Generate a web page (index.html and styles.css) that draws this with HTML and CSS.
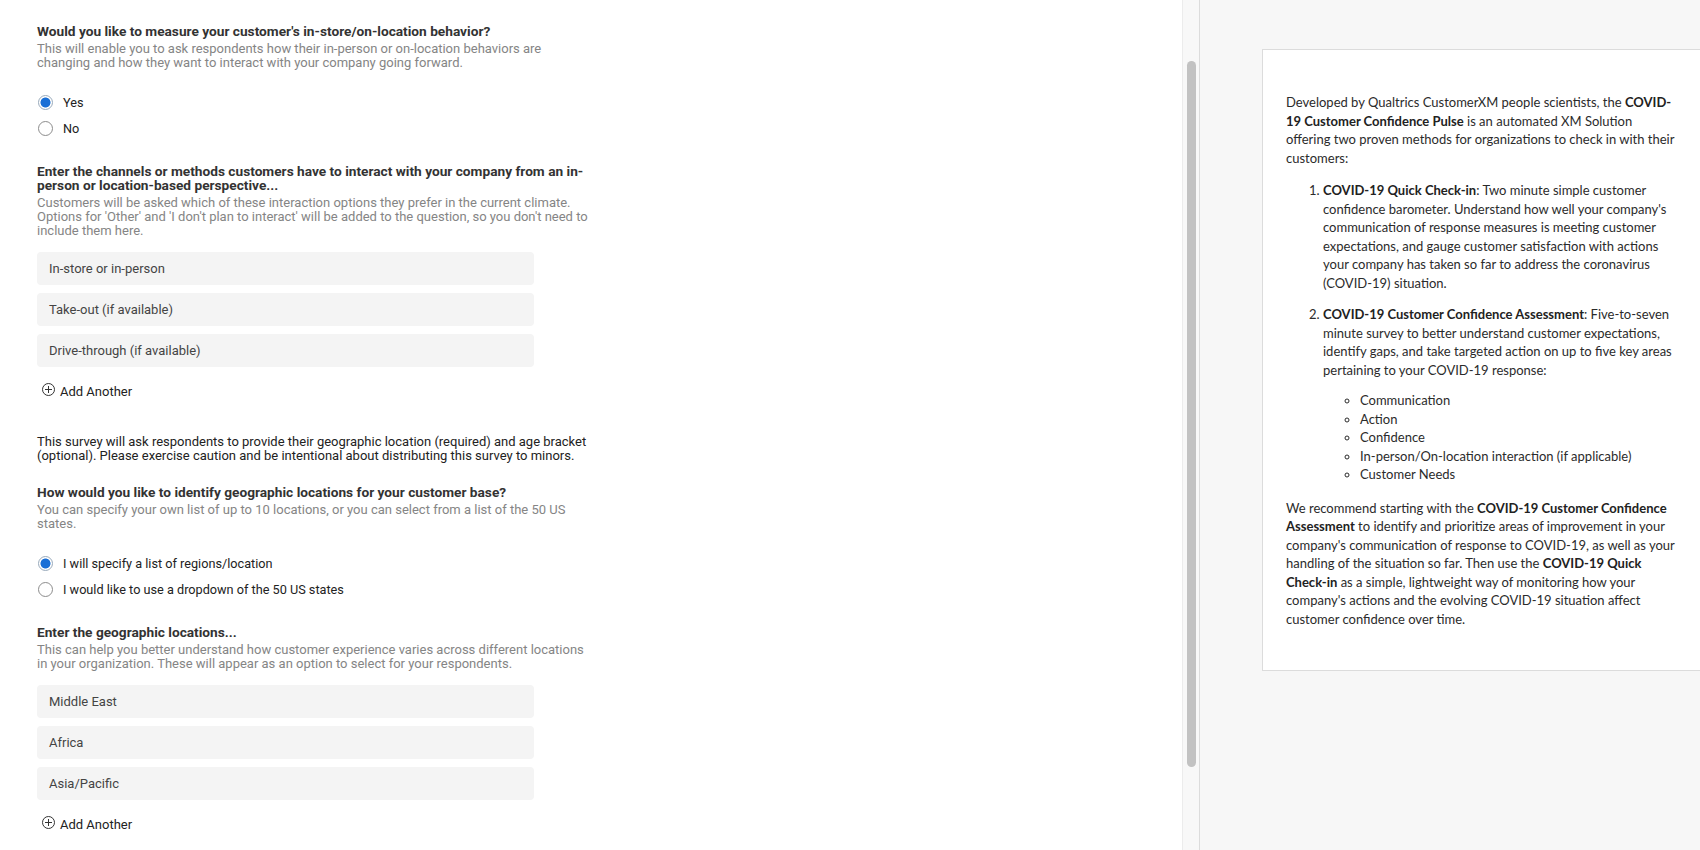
FILE: index.html
```
<!DOCTYPE html>
<html lang="en">
<head>
    <meta charset="UTF-8">
    <title>COVID-19 Customer Confidence Pulse</title>
    <link rel="stylesheet" href="styles.css">
</head>
<body>
<div class="layout">
    <div class="form-pane">
        <div class="question">
            <h3>Would you like to measure your customer's in-store/on-location behavior?</h3>
            <p class="hint">This will enable you to ask respondents how their in-person or on-location behaviors are changing and how they want to interact with your company going forward.</p>
        </div>
        <ul class="choices">
            <li><span class="radio checked"></span>Yes</li>
            <li><span class="radio"></span>No</li>
        </ul>

        <div class="question">
            <h3>Enter the channels or methods customers have to interact with your company from an in-person or location-based perspective...</h3>
            <p class="hint">Customers will be asked which of these interaction options they prefer in the current climate. Options for 'Other' and 'I don't plan to interact' will be added to the question, so you don't need to include them here.</p>
        </div>
        <div class="entries">
            <div class="entry">In-store or in-person</div>
            <div class="entry">Take-out (if available)</div>
            <div class="entry">Drive-through (if available)</div>
        </div>
        <a class="add" href="#"><span class="add-icon"></span>Add Another</a>

        <p class="notice">This survey will ask respondents to provide their geographic location (required) and age bracket (optional). Please exercise caution and be intentional about distributing this survey to minors.</p>

        <div class="question">
            <h3>How would you like to identify geographic locations for your customer base?</h3>
            <p class="hint">You can specify your own list of up to 10 locations, or you can select from a list of the 50 US states.</p>
        </div>
        <ul class="choices">
            <li><span class="radio checked"></span>I will specify a list of regions/location</li>
            <li><span class="radio"></span>I would like to use a dropdown of the 50 US states</li>
        </ul>

        <div class="question">
            <h3>Enter the geographic locations...</h3>
            <p class="hint">This can help you better understand how customer experience varies across different locations in your organization. These will appear as an option to select for your respondents.</p>
        </div>
        <div class="entries">
            <div class="entry">Middle East</div>
            <div class="entry">Africa</div>
            <div class="entry">Asia/Pacific</div>
        </div>
        <a class="add" href="#"><span class="add-icon"></span>Add Another</a>
    </div>

    <div class="scroll-track"><div class="scroll-thumb"></div></div>

    <div class="info-pane">
        <div class="info-card">
            <p>Developed by Qualtrics CustomerXM people scientists, the <b>COVID-19 Customer Confidence Pulse</b> is an automated XM Solution<br>offering two proven methods for organizations to check in with their customers:</p>
            <ol>
                <li><b>COVID-19 Quick Check-in</b>: Two minute simple customer confidence barometer. Understand how well your company's communication of response measures is meeting customer expectations, and gauge customer satisfaction with actions your company has taken so far to address the coronavirus (COVID-19) situation.</li>
                <li><b>COVID-19 Customer Confidence Assessment</b>: Five-to-seven minute survey to better understand customer expectations, identify gaps, and take targeted action on up to five key areas pertaining to your COVID-19 response:
                    <ul>
                        <li>Communication</li>
                        <li>Action</li>
                        <li>Confidence</li>
                        <li>In-person/On-location interaction (if applicable)</li>
                        <li>Customer Needs</li>
                    </ul>
                </li>
            </ol>
            <p>We recommend starting with the <b>COVID-19 Customer Confidence Assessment</b> to identify and prioritize areas of improvement in your company's communication of response to COVID-19, as well as your handling of the situation so far. Then use the <b>COVID-19 Quick Check-in</b> as a simple, lightweight way of monitoring how your company's actions and the evolving COVID-19 situation affect customer confidence over time.</p>
        </div>
    </div>
</div>
</body>
</html>
```

FILE: styles.css
```
* {
    margin: 0;
    padding: 0;
    box-sizing: border-box;
}

body {
    font-family: Roboto, "Liberation Sans", Arial, sans-serif;
    color: #333;
    background: #fff;
    overflow: hidden;
}

ul, ol {
    list-style: none;
}

.layout {
    display: flex;
    height: 850px;
    overflow: hidden;
}

/* left: setup form */
.form-pane {
    width: 1182px;
    flex-shrink: 0;
    padding: 24px 0 0 37px;
}

.question {
    width: 556px;
    font-size: 13px;
    line-height: 14px;
}

.question h3 {
    font-size: 13.7px;
    font-weight: 700;
    color: #333;
    margin-bottom: 4px;
}

.hint {
    color: #858585;
}

.choices {
    margin: 19.5px 0 22.5px;
    font-size: 12.7px;
}

.choices li {
    display: flex;
    align-items: center;
    height: 26px;
    color: #222;
}

.radio {
    width: 15px;
    height: 15px;
    border: 1px solid #8c8c8c;
    border-radius: 50%;
    background: #fff;
    margin-left: 1px;
    margin-right: 10px;
}

.radio.checked {
    border-color: #9ab;
    background: radial-gradient(circle, #1a6fd6 0, #1a6fd6 4.6px, #fff 5.4px);
}

.entries {
    margin-top: 14px;
    width: 497px;
}

.entry {
    height: 33px;
    line-height: 33px;
    margin-bottom: 8px;
    padding-left: 12px;
    background: #f4f4f4;
    border-radius: 4px;
    font-size: 13px;
    color: #444;
}

.entry:last-child {
    margin-bottom: 0;
}

.add {
    display: flex;
    align-items: center;
    height: 20px;
    margin-top: 14px;
    padding-left: 5px;
    font-size: 13px;
    color: #222;
    text-decoration: none;
}

.add-icon {
    position: relative;
    width: 13px;
    height: 13px;
    border: 1px solid #333;
    border-radius: 50%;
    margin-right: 5px;
    margin-top: -3px;
}

.add-icon::before,
.add-icon::after {
    content: "";
    position: absolute;
    left: 50%;
    top: 50%;
    background: #333;
}

.add-icon::before {
    width: 7px;
    height: 1px;
    margin: -0.5px 0 0 -3.5px;
}

.add-icon::after {
    width: 1px;
    height: 7px;
    margin: -3.5px 0 0 -0.5px;
}

.notice {
    width: 556px;
    margin: 34px 0 22px;
    font-size: 13px;
    line-height: 14px;
    color: #222;
}

/* scrollbar between panes */
.scroll-track {
    width: 18px;
    flex-shrink: 0;
    background: #f8f8f8;
    border-left: 1px solid #ececec;
    border-right: 1px solid #dcdcdc;
    padding: 61px 0 0 4px;
}

.scroll-thumb {
    width: 9px;
    height: 706px;
    border-radius: 5px;
    background: #c2c2c2;
}

/* right: description */
.info-pane {
    flex: 1;
    background: #f7f7f7;
    padding: 49px 0 0 62px;
    overflow: hidden;
}

.info-card {
    width: 470px;
    background: #fff;
    border: 1px solid #dcdcdc;
    padding: 43px 0 42px 23px;
    font-family: Lato, "Open Sans", sans-serif;
    font-size: 13px;
    line-height: 18.5px;
    color: #2b2b2b;
}

.info-card p {
    width: 396px;
}

.info-card ol {
    width: 397px;
    list-style: decimal;
    padding-left: 37px;
    margin: 14px 0 15px;
}

.info-card ol > li {
    margin-bottom: 13px;
}

.info-card ol > li:last-child {
    margin-bottom: 0;
}

.info-card ul {
    list-style: circle;
    padding-left: 37px;
    margin-top: 12px;
}

.info-card b {
    font-weight: 700;
    color: #222;
}
```
